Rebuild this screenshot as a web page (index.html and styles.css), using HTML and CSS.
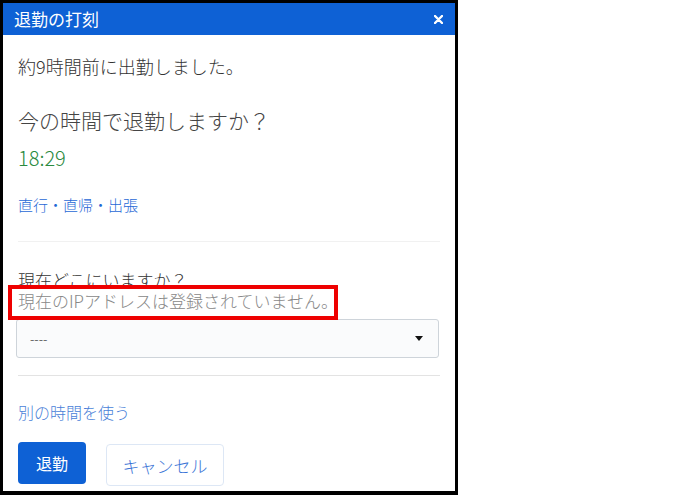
FILE: index.html
```html
<!DOCTYPE html>
<html lang="ja">
<head>
<meta charset="UTF-8">
<meta name="viewport" content="width=device-width, initial-scale=1.0">
<title>退勤の打刻</title>
<link rel="stylesheet" href="styles.css">
</head>
<body>
<div class="dialog">
    <div class="dialog-header">
        <span class="dialog-title">退勤の打刻</span>
        <button class="close-button" type="button" aria-label="閉じる">
            <svg width="9" height="9" viewBox="0 0 9 9"><path d="M1 1L8 8M8 1L1 8" stroke="#fff" stroke-width="2.4" stroke-linecap="round"/></svg>
        </button>
    </div>
    <div class="dialog-body">
        <p class="elapsed">約9時間前に出勤しました。</p>
        <p class="question">今の時間で退勤しますか？</p>
        <p class="clock-time">18:29</p>
        <a class="trip-link" href="#">直行・直帰・出張</a>

        <hr class="divider first">

        <div class="location">
            <label class="location-label" for="location-select">現在どこにいますか？</label>
            <p class="ip-note">現在のIPアドレスは登録されていません。</p>
            <div class="select-box" id="location-select">
                <span class="select-value">----</span>
                <span class="select-caret"></span>
            </div>
        </div>

        <hr class="divider second">

        <a class="other-time" href="#">別の時間を使う</a>

        <div class="actions">
            <button class="btn btn-primary" type="button">退勤</button>
            <button class="btn btn-cancel" type="button">キャンセル</button>
        </div>
    </div>
</div>
</body>
</html>
```

FILE: styles.css
```css
body {
    margin: 0;
    padding: 0;
    background-color: #fff;
    font-family: "Noto Sans CJK JP", "Noto Sans", sans-serif;
    font-weight: 300;
}

.dialog {
    width: 458px;
    height: 495px;
    box-sizing: border-box;
    border: 3px solid #000;
    border-bottom-width: 4px;
    background-color: #fff;
}

.dialog-header {
    height: 32px;
    background-color: #0e61d5;
    display: flex;
    align-items: center;
    justify-content: space-between;
    padding: 0 10px 0 11px;
}

.dialog-title {
    color: #fff;
    font-size: 17px;
    font-weight: 400;
    line-height: 32px;
}

.close-button {
    background: none;
    border: none;
    padding: 0;
    width: 14px;
    height: 14px;
    display: flex;
    align-items: center;
    justify-content: center;
    cursor: pointer;
}

.dialog-body {
    padding: 17px 15px 0 15px;
}

.dialog-body p {
    margin: 0;
}

.elapsed {
    font-size: 18px;
    line-height: 28px;
    color: #333;
}

.question {
    margin-top: 25px !important;
    font-size: 21px;
    line-height: 30px;
    color: #444;
}

.clock-time {
    margin-top: 9px !important;
    font-size: 20px;
    line-height: 28px;
    color: #2a8a3e;
}

.trip-link,
.other-time {
    display: block;
    text-decoration: none;
    color: #1f68d6;
}

.trip-link {
    margin-top: 20px;
    font-size: 15px;
    line-height: 25px;
}

.divider {
    border: none;
    height: 1px;
    margin: 0;
}

.divider.first {
    margin-top: 24px;
    background-color: #f1f1f1;
}

.divider.second {
    margin-top: 17px;
    background-color: #e3e3e3;
}

.location {
    display: flex;
    flex-direction: column;
    align-items: flex-start;
}

.location-label {
    margin-top: 25px;
    font-size: 17px;
    line-height: 26px;
    color: #333;
}

/* highlighted note about the unregistered address */
.ip-note {
    position: relative;
    margin: -8px 0 0 -10px !important;
    width: 316px;
    box-sizing: content-box;
    padding: 0 0 3px 6px;
    border: 4px solid #ee0000;
    font-size: 17px;
    line-height: 24px;
    color: #888;
    white-space: nowrap;
}

.select-box {
    margin: -1px 0 0 -2px;
    width: 423px;
    height: 39px;
    box-sizing: border-box;
    border: 1px solid #ced4da;
    border-radius: 3px;
    background-color: #fafbfc;
    display: flex;
    align-items: center;
    justify-content: space-between;
    padding: 0 15px 0 13px;
}

.select-value {
    font-size: 13px;
    color: #333;
    line-height: 20px;
}

.select-caret {
    width: 0;
    height: 0;
    border-left: 4px solid transparent;
    border-right: 4px solid transparent;
    border-top: 5px solid #111;
}

.other-time {
    margin-top: 24px;
    font-size: 16px;
    line-height: 24px;
    color: #4a7fd8;
}

.actions {
    display: flex;
    align-items: flex-start;
    gap: 20px;
    margin-top: 18px;
}

.btn {
    font-family: inherit;
    font-weight: 400;
    cursor: pointer;
    box-sizing: border-box;
    border-radius: 4px;
    padding: 0;
}

.btn-primary {
    width: 68px;
    height: 42px;
    background-color: #0e61d5;
    border: none;
    color: #fff;
    font-size: 16px;
}

.btn-cancel {
    margin-top: 2px;
    width: 118px;
    height: 42px;
    background-color: #fff;
    border: 1px solid #dde7f5;
    color: #3a74d6;
    font-size: 17px;
    font-weight: 300;
}
```
